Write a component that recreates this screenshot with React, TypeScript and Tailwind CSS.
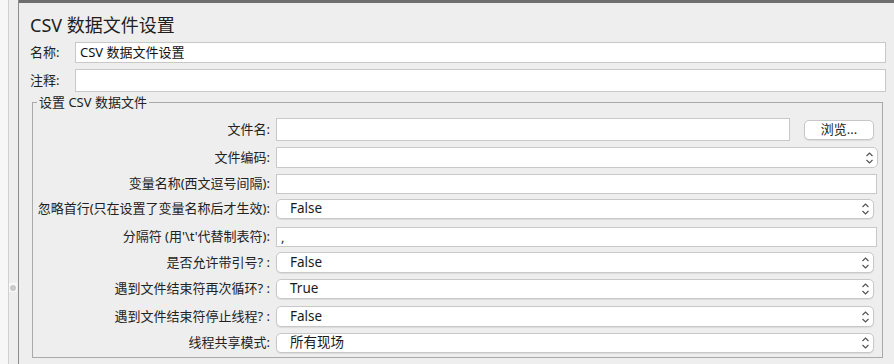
import React from "react";

const FONT = "font-['Noto_Sans','Noto_Sans_CJK_SC',sans-serif]";

function Chevron() {
  return (
    <svg width="9" height="14" viewBox="0 0 9 14" className="shrink-0">
      <path d="M1.5 5 L4.5 2 L7.5 5" fill="none" stroke="#555" strokeWidth="1.2" />
      <path d="M1.5 9 L4.5 12 L7.5 9" fill="none" stroke="#555" strokeWidth="1.2" />
    </svg>
  );
}

function Select({ value, h, mr }: { value: string; h: string; mr: string }) {
  return (
    <div
      className={`flex-1 ${h} ${mr} flex items-center justify-between bg-white border border-[#c8c8c8] rounded-[5px] shadow-[0_1px_1px_rgba(0,0,0,0.08)] pl-[13px] pr-[3px]`}
    >
      <span className="text-[13.5px] text-[#1a1a1a] leading-none">{value}</span>
      <Chevron />
    </div>
  );
}

function Input({ value, h, mr }: { value?: string; h: string; mr: string }) {
  return (
    <div className={`flex-1 ${h} ${mr} flex items-center bg-white border border-[#c8c8c8] pl-[4px]`}>
      <span className="text-[13px] text-[#222] leading-none">{value}</span>
    </div>
  );
}

function Row({ label, mt, children }: { label: string; mt: string; children: React.ReactNode }) {
  return (
    <div className={`flex items-center ${mt}`}>
      <div className="w-[243px] shrink-0 text-right text-[13px] text-[#222] pr-[6px] whitespace-nowrap">{label}</div>
      <div className="flex-1 flex items-center">{children}</div>
    </div>
  );
}

export default function App() {
  return (
    <div className={`w-[894px] h-[364px] bg-[#eeeeee] flex overflow-hidden relative ${FONT}`}>
      <div className="w-[9px] h-full bg-[#f7f7f7] border-r border-[#d0d0d0]" />
      <div className="w-[10px] h-full bg-[#eeeeee] border-r border-[#8c8c8c]" />
      <div className="absolute left-[9px] top-[283px] w-[8px] h-[9px] bg-[#f8f8f8] flex items-center justify-center">
        <div className="w-[6px] h-[6px] rounded-full bg-[#c9c9c9]" />
      </div>
      <div className="flex-1 flex flex-col border-t-[3px] border-[#6e6e6e] pl-[11px] pr-[8px]">
        <div className="text-[18px] text-[#1e1e1e] leading-[24px] mt-[10px]">CSV 数据文件设置</div>
        <div className="flex items-center mt-[5px]">
          <div className="w-[45px] text-[13px] text-[#222]">名称:</div>
          <div className="flex-1 h-[21px] bg-white border border-[#c8c8c8] flex items-center pl-[4px]">
            <span className="text-[13px] text-[#111] leading-none">CSV 数据文件设置</span>
          </div>
        </div>
        <div className="flex items-center mt-[6px]">
          <div className="w-[45px] text-[13px] text-[#222]">注释:</div>
          <div className="flex-1 h-[23px] bg-white border border-[#c8c8c8]" />
        </div>
        <div className="relative mt-[10px] ml-[2px] mr-[3px] h-[256px] border border-[#a9a9a9] pt-[15px]">
          <div className="absolute -top-[10px] left-[4px] px-[2px] bg-[#eeeeee] text-[13px] text-[#222] leading-[18px]">
            设置 CSV 数据文件
          </div>
          <Row label="文件名:" mt="mt-0">
            <Input h="h-[23px]" mr="mr-[14px]" />
            <div className="w-[70px] h-[20px] mr-[8px] bg-white border border-[#c6c6c6] rounded-[5px] shadow-[0_1px_1px_rgba(0,0,0,0.08)] flex items-center justify-center text-[13px] text-[#222]">
              浏览...
            </div>
          </Row>
          <Row label="文件编码:" mt="mt-[6px]">
            <div className="flex-1 h-[21px] mr-[4px] flex items-center justify-end bg-white border border-[#c8c8c8] rounded-r-[5px] pr-[3px]">
              <Chevron />
            </div>
          </Row>
          <Row label="变量名称(西文逗号间隔):" mt="mt-[6px]">
            <Input h="h-[20px]" mr="mr-[5px]" />
          </Row>
          <Row label="忽略首行(只在设置了变量名称后才生效):" mt="mt-[5px]">
            <Select value="False" h="h-[20px]" mr="mr-[8px]" />
          </Row>
          <Row label="分隔符 (用'\t'代替制表符):" mt="mt-[8px]">
            <Input value="," h="h-[20px]" mr="mr-[5px]" />
          </Row>
          <Row label="是否允许带引号? :" mt="mt-[5px]">
            <Select value="False" h="h-[21px]" mr="mr-[8px]" />
          </Row>
          <Row label="遇到文件结束符再次循环? :" mt="mt-[6px]">
            <Select value="True" h="h-[20px]" mr="mr-[8px]" />
          </Row>
          <Row label="遇到文件结束符停止线程? :" mt="mt-[7px]">
            <Select value="False" h="h-[21px]" mr="mr-[8px]" />
          </Row>
          <Row label="线程共享模式:" mt="mt-[6px]">
            <Select value="所有现场" h="h-[20px]" mr="mr-[8px]" />
          </Row>
        </div>
      </div>
    </div>
  );
}
